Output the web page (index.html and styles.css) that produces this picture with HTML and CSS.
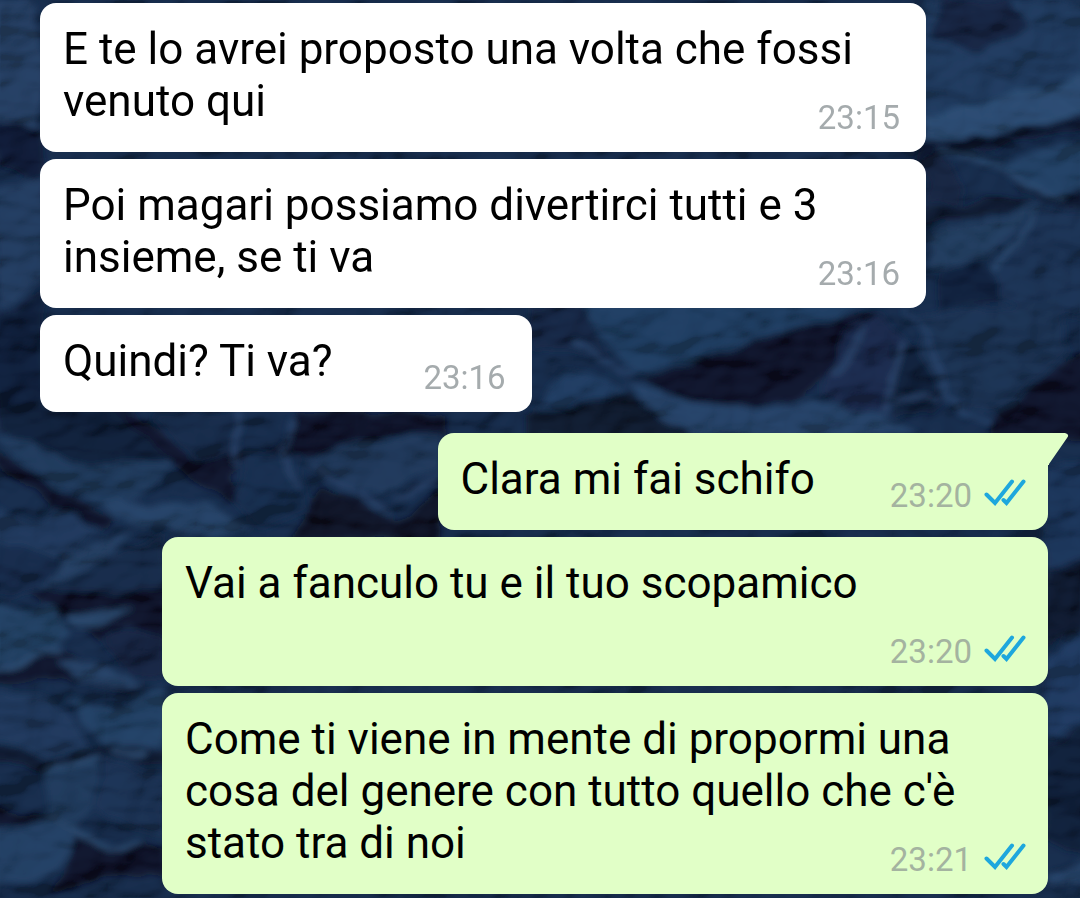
FILE: index.html
```
<!DOCTYPE html>
<html lang="it">
<head>
    <meta charset="UTF-8">
    <meta name="viewport" content="width=device-width, initial-scale=1.0">
    <title>Chat</title>
    <link rel="stylesheet" href="styles.css">
</head>
<body>

    <!-- Crumpled paper wallpaper -->
    <svg class="wallpaper" viewBox="0 0 1080 898" preserveAspectRatio="xMidYMid slice" aria-hidden="true">
        <defs>
            <filter id="soft" x="-5%" y="-5%" width="110%" height="110%">
                <feTurbulence type="fractalNoise" baseFrequency="0.03" numOctaves="2" seed="4" result="n"/>
                <feDisplacementMap in="SourceGraphic" in2="n" scale="16" xChannelSelector="R" yChannelSelector="G"/>
                <feGaussianBlur stdDeviation="3"/>
            </filter>
            <filter id="grain" x="0" y="0" width="100%" height="100%">
                <feTurbulence type="fractalNoise" baseFrequency="0.014 0.02" numOctaves="3" seed="11"/>
                <feDiffuseLighting surfaceScale="26" diffuseConstant="1" lighting-color="#20375a">
                    <feDistantLight azimuth="240" elevation="40"/>
                </feDiffuseLighting>
            </filter>
        </defs>
        <rect width="1080" height="898" fill="#162c4c"/>
        <g filter="url(#soft)">
            <!-- left edge -->
            <path fill="#2a466d" d="M-10 0H30L45 60L40 130L0 120L-10 115Z"/>
            <path fill="#0c1530" d="M-10 118L42 128V180L0 165Z"/>
            <path fill="#254268" d="M-10 190L45 175V280L0 310Z"/>
            <path fill="#111d38" d="M-10 320L45 290V400L0 430Z"/>

            <!-- right side, top -->
            <path fill="#203f66" d="M920 0H1090V110L1040 120L920 145Z"/>
            <path fill="#13233f" d="M940 0L1010 0L1030 25L985 50L930 38Z"/>
            <path fill="#315680" d="M925 115L1050 85L1090 72V112L1030 130L925 142Z"/>
            <path fill="#0c142e" d="M920 142L1000 134L1045 124L1085 112V128L1040 137L985 150L940 152L920 170Z"/>
            <path fill="#284870" d="M938 152L1000 160L1035 152L1090 140V200L1060 195L1010 172Z"/>
            <path fill="#0c152d" d="M1010 172L1060 197L1090 187V215L1055 203L1020 186Z"/>
            <path fill="#14213d" d="M925 160L940 155L965 190L960 205H925Z"/>
            <path fill="#0d152c" d="M925 210L975 204L1005 195L1035 200L980 217L925 225Z"/>
            <path fill="#254469" d="M980 222L1035 202L1020 230L985 260L928 270V235Z"/>
            <path fill="#1a3559" d="M1035 205L1090 218V320L1000 300L985 265Z"/>
            <path fill="#101c39" d="M940 270L980 262L1000 300L940 312Z"/>
            <path fill="none" stroke="#3b608b" stroke-width="3" d="M940 152L1010 171L1065 200M1040 205L1012 250L990 272"/>

            <!-- middle fold -->
            <path fill="#24456c" d="M580 300H880L835 318L745 346L640 376L585 320Z"/>
            <path fill="#152744" d="M530 305H585L610 365L570 350L530 350Z"/>
            <path fill="#080d20" d="M638 378L740 344L835 318L885 312L860 332L830 375L805 398L740 408L690 402L655 388Z"/>
            <path fill="#24436a" d="M530 415L565 370L600 378L628 390L590 402L532 412Z"/>
            <path fill="#2a4b73" d="M628 382L690 402L750 408L840 402L895 420L920 436H690L650 410Z"/>
            <path fill="#0b1227" d="M525 415L595 400L630 392L690 438H525Z"/>
            <path fill="#1a2c50" d="M845 330L880 312L905 340L885 415L850 408L825 395Z"/>
            <path fill="#101b36" d="M892 345L920 345L945 400L930 415L895 415Z"/>
            <path fill="#1b3457" d="M920 315L1055 300L1070 350L1045 375L995 415L945 400L918 350Z"/>
            <path fill="#090e20" d="M1090 345L1055 370L990 425V440H1090Z"/>
            <path fill="none" stroke="#2f4a72" stroke-width="5" d="M866 325L850 350L834 374M903 343L894 375L887 415M895 400L938 398"/>
            <path fill="none" stroke="#2f4e78" stroke-width="4" d="M903 312L925 330L948 398L990 425M570 340L600 360L635 374"/>

            <!-- left middle -->
            <path fill="#111a35" d="M0 405H130L180 455L70 470L25 440L0 430Z"/>
            <path fill="#15294a" d="M150 412H235V458L190 460Z"/>
            <path fill="#233f63" d="M-10 435L30 440L80 468L135 458L180 460L135 500L95 505L55 485L20 460Z"/>
            <path fill="#090e20" d="M-10 448L30 470L70 498L115 522L105 530L60 510L20 482L-10 460Z"/>
            <path fill="#0a1024" d="M110 405L150 420L190 462L250 450L230 475L240 505L205 492L175 466Z"/>
            <path fill="#2b4c72" d="M95 500L145 504L205 502L250 530L215 536L170 528L115 520Z"/>
            <path fill="#182d50" d="M245 450L300 455L310 510L260 530L235 500Z"/>
            <path fill="#0b1022" d="M300 412H445V438L390 435L345 458L300 460L265 450L285 435Z"/>
            <path fill="#203c61" d="M340 448L400 438L440 435V470L385 494L350 485L312 464Z"/>
            <path fill="#090e1d" d="M325 488L360 500L395 520L440 490V540H290Z"/>
            <path fill="none" stroke="#2d4a72" stroke-width="5" d="M238 412L236 465M295 420L280 450L300 490M308 464L355 490L392 512M440 480L395 500"/>

            <!-- under the first reply, left column -->
            <path fill="#213e63" d="M-10 505L30 520L62 510L100 530L60 560L-10 545Z"/>
            <path fill="#172b4b" d="M-10 548L70 555L35 590L-10 600Z"/>
            <path fill="#2b4a70" d="M35 592L70 552L135 532L115 552L80 572Z"/>
            <path fill="#152a49" d="M80 572L165 535V590L110 595L45 592Z"/>
            <path fill="#0b1023" d="M25 592L80 594L165 590V640L130 625L100 642L70 618Z"/>
            <path fill="#28496e" d="M-10 600L60 610L72 632L50 655L-10 675Z"/>
            <path fill="#2f5075" d="M70 612L135 608L105 624L75 628Z"/>
            <path fill="#0a0f20" d="M-10 675L55 650L95 664L150 690L115 695L60 675L-10 688Z"/>
            <path fill="#2b4a70" d="M58 660L95 662L145 687L115 690L80 682Z"/>
            <path fill="#16213f" d="M105 640L135 628L165 640V680L130 676Z"/>
            <path fill="#274970" d="M65 698L115 708L165 688V745L110 750L80 722Z"/>
            <path fill="#203e63" d="M-10 690L50 698L75 725L90 752L55 760L-10 735Z"/>
            <path fill="#0c1429" d="M-10 738L50 760L90 752L112 742L165 750V765L120 758L45 772L-10 758Z"/>
            <path fill="#223f63" d="M50 768L100 756L88 815L78 832L48 815Z"/>
            <path fill="#1b3558" d="M105 760L165 775V835L120 825L92 810Z"/>
            <path fill="#0a1122" d="M-10 805L45 817L80 832L55 835L30 822L-10 825Z"/>
            <path fill="#26476d" d="M-10 830L45 820L78 834L65 860L30 885H-10Z"/>
            <path fill="#0a1021" d="M78 832L110 850L145 842L165 850V880L105 875L50 898L70 862Z"/>
            <path fill="none" stroke="#355880" stroke-width="4" d="M46 818L80 832L110 850L142 842M50 770L100 758M-10 672L60 650M110 750L145 752"/>

            <!-- right edge and gaps -->
            <path fill="#1d385e" d="M1045 465L1090 460V560L1045 580Z"/>
            <path fill="#0c142a" d="M1045 570L1090 560V620L1045 650Z"/>
            <path fill="#21406a" d="M1045 660L1090 625V720L1045 740Z"/>
            <path fill="#101a35" d="M1045 745L1090 725V860L1045 840Z"/>
            <path fill="#2b4b73" d="M1045 875L1090 862V885L1045 885Z"/>
        </g>
        <rect class="grain" width="1080" height="898" filter="url(#grain)"/>
    </svg>

    <!-- Read receipt ticks -->
    <svg class="defs" aria-hidden="true">
        <symbol id="ticks" viewBox="0 0 42 28">
            <path d="M2.500 15.500L11 24L28 2.500M19.500 21L22.500 24L39.500 2.500" fill="none" stroke="#1ea7dd" stroke-width="4" stroke-linecap="round" stroke-linejoin="miter"/>
        </symbol>
    </svg>

    <main class="chat">
        <div class="message in">
            <span class="text">E te lo avrei proposto una volta che fossi venuto qui</span>
            <div class="meta"><time>23:15</time></div>
        </div>
        <div class="message in">
            <span class="text">Poi magari possiamo divertirci tutti e 3 insieme, se ti va</span>
            <div class="meta"><time>23:16</time></div>
        </div>
        <div class="message in">
            <span class="text">Quindi? Ti va?</span>
            <div class="meta"><time>23:16</time></div>
        </div>

        <div class="message out first">
            <svg class="tail" viewBox="0 0 21 32" aria-hidden="true"><path d="M0 0H17Q22 1 19 5L1 31V32H0Z" fill="#e1ffc7"/></svg>
            <span class="text">Clara mi fai schifo</span>
            <div class="meta"><time>23:20</time><svg class="ticks"><use href="#ticks"/></svg></div>
        </div>
        <div class="message out">
            <span class="text">Vai a fanculo tu e il tuo scopamico</span>
            <div class="meta"><time>23:20</time><svg class="ticks"><use href="#ticks"/></svg></div>
        </div>
        <div class="message out">
            <span class="text">Come ti viene in mente di propormi una cosa del genere con tutto quello che c'è stato tra di noi</span>
            <div class="meta"><time>23:21</time><svg class="ticks"><use href="#ticks"/></svg></div>
        </div>
    </main>

</body>
</html>
```
FILE: styles.css
```
* {
    box-sizing: border-box;
}

body {
    margin: 0;
    font-family: Roboto, Arial, sans-serif;
    background-color: #162c4c;
    color: #000;
}

.wallpaper {
    position: fixed;
    inset: 0;
    width: 100%;
    height: 100%;
    z-index: -1;
}

.grain {
    opacity: 0.28;
}

.defs {
    display: none;
}

.chat {
    display: flex;
    flex-direction: column;
    gap: 7px;
    padding: 3px 32px 5px 40px;
}

.message {
    position: relative;
    display: flow-root;
    max-width: 886px;
    padding: 20px 22px 14px 23px;
    border-radius: 16px;
    font-size: 44px;
    line-height: 52px;
}

.in {
    align-self: flex-start;
    background: #fff;
}

.out {
    align-self: flex-end;
    background: #e1ffc7;
}

.first {
    margin-top: 14px;
    border-top-right-radius: 0;
}

/* floats beside the last line, or drops below it when there is no room */
.meta {
    float: right;
    display: flex;
    align-items: center;
    gap: 12px;
    margin: 23px 4px 0 91px;
    color: #a5abad;
    font-size: 33px;
    line-height: 40px;
}

.out .meta {
    margin-right: 0;
    margin-left: 75px;
    color: #a4b3a0;
}

.ticks {
    width: 42px;
    height: 28px;
    margin-bottom: 6px;
}

.tail {
    position: absolute;
    top: 0;
    left: 100%;
    width: 21px;
    height: 32px;
}
```
